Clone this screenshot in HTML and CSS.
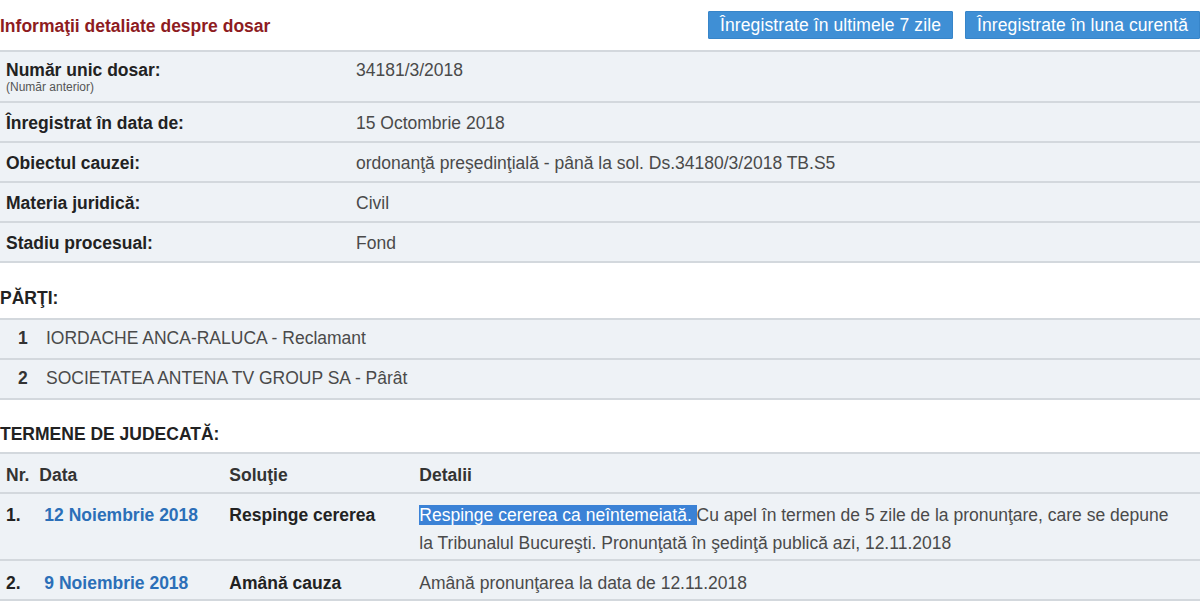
FILE: index.html
```html
<!DOCTYPE html>
<html lang="ro">
<head>
<meta charset="utf-8">
<title>Informaţii detaliate despre dosar</title>
<link rel="stylesheet" href="styles.css">
</head>
<body>
<div class="page">
  <div class="topbar">
    <h1 class="title">Informaţii detaliate despre dosar</h1>
    <div class="actions">
      <a class="btn" href="#">Înregistrate în ultimele 7 zile</a>
      <a class="btn" href="#">Înregistrate în luna curentă</a>
    </div>
  </div>

  <table class="grid info">
    <tr class="first">
      <td class="lbl">Număr unic dosar:<span class="sub">(Număr anterior)</span></td>
      <td class="val">34181/3/2018</td>
    </tr>
    <tr>
      <td class="lbl">Înregistrat în data de:</td>
      <td class="val">15 Octombrie 2018</td>
    </tr>
    <tr>
      <td class="lbl">Obiectul cauzei:</td>
      <td class="val">ordonanţă preşedinţială - până la sol. Ds.34180/3/2018 TB.S5</td>
    </tr>
    <tr>
      <td class="lbl">Materia juridică:</td>
      <td class="val">Civil</td>
    </tr>
    <tr>
      <td class="lbl">Stadiu procesual:</td>
      <td class="val">Fond</td>
    </tr>
  </table>

  <h2 class="section parts-title">PĂRŢI:</h2>
  <table class="grid parties">
    <tr>
      <td class="num">1</td>
      <td class="val">IORDACHE ANCA-RALUCA - Reclamant</td>
    </tr>
    <tr>
      <td class="num">2</td>
      <td class="val">SOCIETATEA ANTENA TV GROUP SA - Pârât</td>
    </tr>
  </table>

  <h2 class="section terms-title">TERMENE DE JUDECATĂ:</h2>
  <table class="grid terms">
    <tr class="head">
      <td class="c-nr">Nr.</td>
      <td class="c-date">Data</td>
      <td class="c-sol">Soluţie</td>
      <td class="c-det">Detalii</td>
    </tr>
    <tr class="r1">
      <td class="c-nr strong">1.</td>
      <td class="c-date"><a class="date" href="#">12 Noiembrie 2018</a></td>
      <td class="c-sol strong">Respinge cererea</td>
      <td class="c-det val"><span class="sel">Respinge cererea ca neîntemeiată. </span>Cu apel în termen de 5 zile de la pronunţare, care se depune la Tribunalul Bucureşti. Pronunţată în şedinţă publică azi, 12.11.2018</td>
    </tr>
    <tr class="r2">
      <td class="c-nr strong">2.</td>
      <td class="c-date"><a class="date" href="#">9 Noiembrie 2018</a></td>
      <td class="c-sol strong">Amână cauza</td>
      <td class="c-det val">Amână pronunţarea la data de 12.11.2018</td>
    </tr>
  </table>
</div>
</body>
</html>
```

FILE: styles.css
```css
html, body {
  margin: 0;
  padding: 0;
  background: #ffffff;
  overflow: hidden;
}

body {
  font-family: "Liberation Sans", Arial, sans-serif;
  font-size: 17.5px;
  color: #222;
}

.page {
  width: 1200px;
}

.topbar {
  display: flex;
  justify-content: space-between;
  align-items: center;
  height: 50px;
}

.title {
  margin: 0;
  font-size: 17.5px;
  font-weight: bold;
  color: #8e1c1f;
  position: relative;
  top: 1px;
}

.actions {
  display: flex;
  gap: 12px;
  margin-right: 0;
}

.btn {
  display: block;
  background: #3f8fd5;
  border: 1px solid #3785c9;
  color: #ffffff;
  text-decoration: none;
  font-size: 17.5px;
  height: 26px;
  line-height: 26px;
  padding: 0 11px;
  border-radius: 1px;
  letter-spacing: 0.1px;
}

.grid {
  width: 100%;
  border-collapse: collapse;
  background: #eef2f6;
  border-bottom: 2px solid #d3d8dd;
}

.grid td {
  border-top: 2px solid #d3d8dd;
  padding: 5px 6px;
  line-height: 28px;
  vertical-align: top;
}

.info .lbl {
  width: 338px;
  font-weight: bold;
  color: #222;
}

.val {
  color: #4a4a4a;
}

.info tr.first td {
  padding-top: 7px;
  padding-bottom: 7px;
  line-height: 22px;
}

.sub {
  display: block;
  margin-top: -1px;
  font-size: 12px;
  font-weight: normal;
  color: #555;
  line-height: 14px;
}

.info tr:not(.first) td {
  padding-top: 6px;
  padding-bottom: 4px;
}

.section {
  margin: 0;
  font-size: 17.5px;
  font-weight: bold;
  color: #222;
}

.parts-title {
  height: 55px;
  line-height: 70px;
}

.terms-title {
  height: 52px;
  line-height: 68px;
}

.parties .num {
  width: 16px;
  padding-left: 18px;
  padding-right: 6px;
  font-weight: bold;
  color: #333;
}

.parties td {
  padding-top: 4px;
  padding-bottom: 6px;
}

.terms .c-nr {
  width: 21px;
  padding-right: 4px;
  white-space: nowrap;
}
.terms .c-date { width: 178px; }
.terms .c-sol { width: 178px; }
.terms .c-det { padding-right: 24px; }

.terms .head td {
  font-weight: bold;
  color: #333;
  padding-top: 7px;
  padding-bottom: 3px;
}

.terms .strong {
  font-weight: bold;
  color: #222;
}

.terms .r1 td {
  padding-top: 7px;
  padding-bottom: 2px;
}

.terms .r2 td {
  padding-top: 8px;
  padding-bottom: 2px;
}

.date {
  display: inline-block;
  padding-left: 5px;
  font-weight: bold;
  color: #2b6fb8;
  text-decoration: none;
}

.sel {
  background: #3b82d6;
  color: #ffffff;
}
```
